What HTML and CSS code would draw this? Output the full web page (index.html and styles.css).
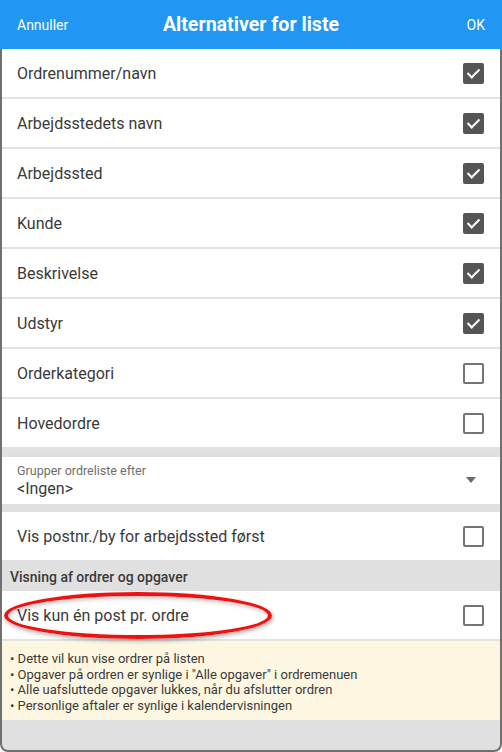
FILE: index.html
```html
<!DOCTYPE html>
<html lang="da">
<head>
    <meta charset="UTF-8">
    <meta name="viewport" content="width=device-width, initial-scale=1.0">
    <title>Alternativer for liste</title>
    <link rel="stylesheet" href="styles.css">
</head>
<body>
    <div class="dialog">
        <div class="top-bar">
            <span class="bar-btn">Annuller</span>
            <span class="bar-title">Alternativer for liste</span>
            <span class="bar-btn right">OK</span>
        </div>

        <div class="content">
            <div class="row"><span>Ordrenummer/navn</span><span class="check on"></span></div>
            <div class="row"><span>Arbejdsstedets navn</span><span class="check on"></span></div>
            <div class="row"><span>Arbejdssted</span><span class="check on"></span></div>
            <div class="row"><span>Kunde</span><span class="check on"></span></div>
            <div class="row"><span>Beskrivelse</span><span class="check on"></span></div>
            <div class="row"><span>Udstyr</span><span class="check on"></span></div>
            <div class="row"><span>Orderkategori</span><span class="check"></span></div>
            <div class="row"><span>Hovedordre</span><span class="check"></span></div>

            <div class="picker">
                <div>
                    <div class="picker-label">Grupper ordreliste efter</div>
                    <div class="picker-value">&lt;Ingen&gt;</div>
                </div>
                <span class="arrow"></span>
            </div>

            <div class="row single"><span>Vis postnr./by for arbejdssted først</span><span class="check"></span></div>

            <div class="section">Visning af ordrer og opgaver</div>

            <div class="row marked"><span>Vis kun én post pr. ordre</span><span class="check"></span>
                <span class="ring"></span>
            </div>

            <div class="info">
                <div>• Dette vil kun vise ordrer på listen</div>
                <div>• Opgaver på ordren er synlige i "Alle opgaver" i ordremenuen</div>
                <div>• Alle uafsluttede opgaver lukkes, når du afslutter ordren</div>
                <div>• Personlige aftaler er synlige i kalendervisningen</div>
            </div>
        </div>
    </div>
</body>
</html>
```

FILE: styles.css
```css
* {
    margin: 0;
    padding: 0;
    box-sizing: border-box;
    font-family: Roboto, "Liberation Sans", sans-serif;
}
body {
    width: 502px;
    height: 752px;
    overflow: hidden;
    background-color: #ffffff;
}
.dialog {
    height: 752px;
    display: flex;
    flex-direction: column;
}
.top-bar {
    height: 49px;
    background-color: #2196f3;
    color: #ffffff;
    display: grid;
    grid-template-columns: 1fr auto 1fr;
    align-items: center;
    padding: 0 17px;
}
.bar-btn {
    font-size: 14px;
}
.bar-btn.right {
    text-align: right;
}
.bar-title {
    font-size: 19.6px;
    font-weight: bold;
}
.content {
    flex: 1;
    background-color: #e0e0e0;
    border: 2px solid #707070;
    border-top: none;
    border-radius: 0 0 8px 8px;
    display: flex;
    flex-direction: column;
}
.row {
    position: relative;
    height: 50px;
    background-color: #ffffff;
    border-bottom: 2px solid #e3e3e3;
    display: flex;
    align-items: center;
    justify-content: space-between;
    padding: 1px 16px 0 15px;
    font-size: 16px;
    color: #3a3a3a;
}
.row.single {
    height: 48px;
    border-bottom: none;
}
.check {
    width: 21px;
    height: 21px;
    border: 2px solid #747474;
    border-radius: 2px;
    position: relative;
}
.check.on {
    background-color: #555555;
    border-color: #555555;
}
.check.on::after {
    content: "";
    position: absolute;
    left: 5px;
    top: 1px;
    width: 5px;
    height: 10px;
    border: solid #ffffff;
    border-width: 0 2px 2px 0;
    transform: rotate(45deg);
}
.picker {
    margin-top: 8px;
    height: 47px;
    background-color: #ffffff;
    display: flex;
    align-items: center;
    justify-content: space-between;
    padding: 1px 24px 0 15px;
}
.picker-label {
    font-size: 12.5px;
    color: #6e6e6e;
    line-height: 16px;
}
.picker-value {
    font-size: 16px;
    color: #3a3a3a;
    line-height: 20px;
}
.arrow {
    width: 0;
    height: 0;
    border-left: 5px solid transparent;
    border-right: 5px solid transparent;
    border-top: 6px solid #6a6a6a;
    margin-bottom: 2px;
}
.picker + .row {
    margin-top: 8px;
}
.section {
    height: 31px;
    display: flex;
    align-items: center;
    padding: 3px 8px 0;
    font-size: 14px;
    font-weight: 500;
    color: #3a3a3a;
}
.ring {
    position: absolute;
    left: 2px;
    top: 1px;
    width: 268px;
    height: 47px;
    border: 4px solid #ee1111;
    border-radius: 50%;
    box-shadow: 1px 2px 4px rgba(0,0,0,0.35), inset 1px 2px 4px rgba(0,0,0,0.25);
}
.info {
    height: 79px;
    background-color: #fdf7e2;
    padding: 10px 8px 0;
    font-size: 13px;
    line-height: 15.6px;
    color: #3a3a3a;
}
```
